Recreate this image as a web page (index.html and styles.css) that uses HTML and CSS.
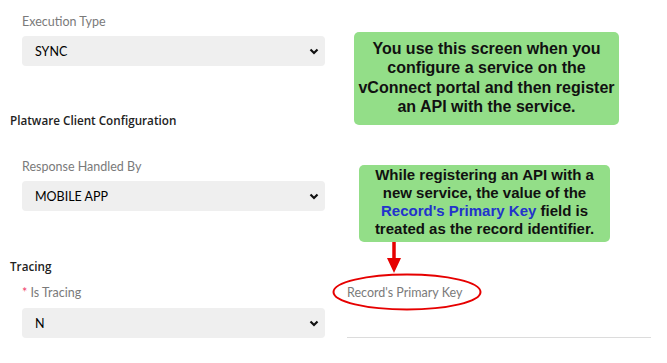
FILE: index.html
```html
<!DOCTYPE html>
<html lang="en">
<head>
  <meta charset="UTF-8">
  <meta name="viewport" content="width=device-width, initial-scale=1.0">
  <title>Service Configuration</title>
  <link rel="stylesheet" href="styles.css">
</head>
<body>
  <div class="page">
    <div class="field first">
      <div class="label">Execution Type</div>
      <div class="select">
        <span>SYNC</span>
        <svg class="chevron" width="10" height="7" viewBox="0 0 10 7"><path d="M1.5 1.5 L5 5 L8.5 1.5" fill="none" stroke="#111" stroke-width="2.2"/></svg>
      </div>
    </div>

    <div class="heading">Platware Client Configuration</div>

    <div class="field">
      <div class="label">Response Handled By</div>
      <div class="select">
        <span>MOBILE APP</span>
        <svg class="chevron" width="10" height="7" viewBox="0 0 10 7"><path d="M1.5 1.5 L5 5 L8.5 1.5" fill="none" stroke="#111" stroke-width="2.2"/></svg>
      </div>
    </div>

    <div class="heading tracing">Tracing</div>

    <div class="row">
      <div class="field">
        <div class="label"><span class="req">*</span> Is Tracing</div>
        <div class="select">
          <span>N</span>
          <svg class="chevron" width="10" height="7" viewBox="0 0 10 7"><path d="M1.5 1.5 L5 5 L8.5 1.5" fill="none" stroke="#111" stroke-width="2.2"/></svg>
        </div>
      </div>
      <div class="field">
        <div class="label">Record's Primary Key</div>
        <div class="input"></div>
      </div>
    </div>
  </div>

  <!-- annotations -->
  <div class="note note-one">You use this screen when you<br>configure a service on the<br>vConnect portal and then register<br>an API with the service.</div>
  <div class="note note-two">While registering an API with a<br>new service, the value of the<br><span class="hl">Record's Primary Key</span> field is<br>treated as the record identifier.</div>
  <svg class="marks" width="667" height="363" viewBox="0 0 667 363">
    <line x1="394" y1="242" x2="394" y2="260" stroke="#e60000" stroke-width="3.5"/>
    <polygon points="387,258 401,258 394,273" fill="#e60000"/>
    <ellipse cx="407" cy="292" rx="73.5" ry="17.5" fill="none" stroke="#e60000" stroke-width="2"/>
  </svg>
</body>
</html>
```

FILE: styles.css
```css
* {
  margin: 0;
  padding: 0;
  box-sizing: border-box;
}

body {
  width: 667px;
  height: 363px;
  overflow: hidden;
  background: #fff;
  font-family: Lato, 'Open Sans', sans-serif;
  position: relative;
}

.page {
  padding: 14px 16px 0 10px;
}

.field {
  padding-left: 12px;
}

.label {
  font-size: 12.5px;
  line-height: 16px;
  color: #7a7a7a;
  margin-bottom: 6px;
}

.req {
  color: #f0406a;
}

.select {
  width: 303px;
  height: 30px;
  border-radius: 4px;
  background: #efefef;
  display: flex;
  align-items: center;
  justify-content: space-between;
  padding: 0 6px 0 13px;
  font-size: 12.5px;
  color: #000;
}

.chevron {
  display: block;
}

.heading {
  font-family: 'Open Sans', sans-serif;
  font-weight: 600;
  font-size: 11.7px;
  line-height: 16px;
  color: #222;
  margin: 46px 0 31px;
}

.heading.tracing {
  margin: 47px 0 11px;
}

.row {
  display: grid;
  grid-template-columns: 325px 316px;
}

.row .label {
  margin-bottom: 7px;
}

.input {
  width: 304px;
  height: 30px;
  border-bottom: 1px solid #dcdcdc;
}

.note {
  position: absolute;
  background: #93de88;
  border-radius: 5px;
  font-family: 'Liberation Sans', Arial, sans-serif;
  font-weight: bold;
  text-align: center;
  white-space: nowrap;
  color: #111;
}

.note-one {
  left: 354px;
  top: 32px;
  width: 265px;
  height: 93px;
  padding-top: 7px;
  font-size: 16px;
  line-height: 19.3px;
}

.note-two {
  left: 359px;
  top: 165px;
  width: 251px;
  height: 77px;
  padding-top: 1px;
  font-size: 15px;
  line-height: 18px;
}

.hl {
  color: #2233cc;
}

.marks {
  position: absolute;
  left: 0;
  top: 0;
  pointer-events: none;
}
```
